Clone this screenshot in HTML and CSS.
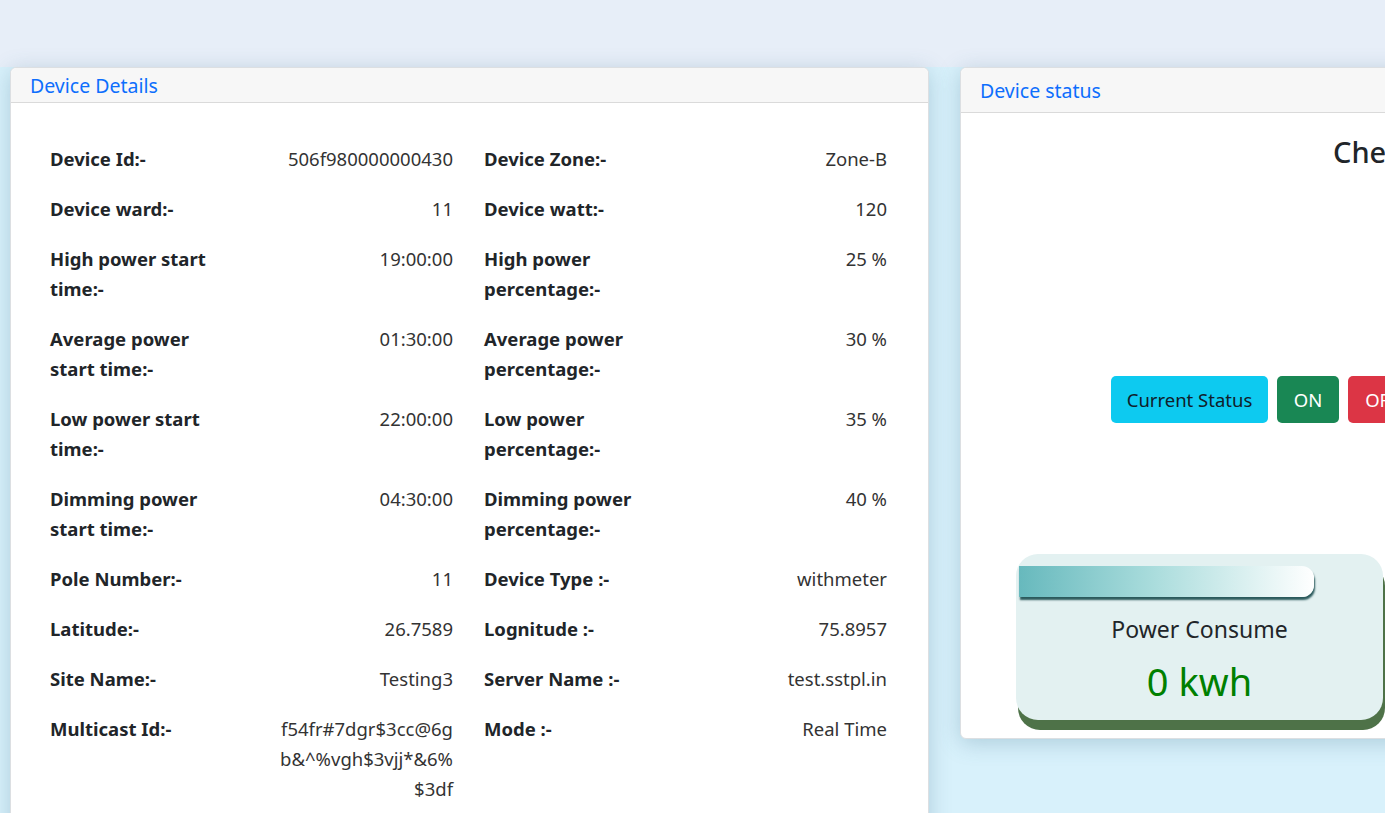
FILE: index.html
```html
<!DOCTYPE html>
<html>
<head>
<meta charset="utf-8">
<link rel="stylesheet" href="styles.css">
</head>
<body>
<div class="topbar"></div>
<main class="content">
  <section class="card details">
    <div class="card-header hdr-sm">Device Details</div>
    <div class="card-body details-body">
      <div class="grid">
        <div class="k">Device Id:-</div><div class="v">506f980000000430</div>
        <div class="k k2">Device Zone:-</div><div class="v">Zone-B</div>

        <div class="k">Device ward:-</div><div class="v">11</div>
        <div class="k k2">Device watt:-</div><div class="v">120</div>

        <div class="k">High power start time:-</div><div class="v">19:00:00</div>
        <div class="k k2">High power percentage:-</div><div class="v">25 %</div>

        <div class="k">Average power start time:-</div><div class="v">01:30:00</div>
        <div class="k k2">Average power percentage:-</div><div class="v">30 %</div>

        <div class="k">Low power start time:-</div><div class="v">22:00:00</div>
        <div class="k k2">Low power percentage:-</div><div class="v">35 %</div>

        <div class="k">Dimming power start time:-</div><div class="v">04:30:00</div>
        <div class="k k2">Dimming power percentage:-</div><div class="v">40 %</div>

        <div class="k">Pole Number:-</div><div class="v">11</div>
        <div class="k k2">Device Type :-</div><div class="v">withmeter</div>

        <div class="k">Latitude:-</div><div class="v">26.7589</div>
        <div class="k k2">Lognitude :-</div><div class="v">75.8957</div>

        <div class="k">Site Name:-</div><div class="v">Testing3</div>
        <div class="k k2">Server Name :-</div><div class="v">test.sstpl.in</div>

        <div class="k">Multicast Id:-</div><div class="v"><span class="ln">f54fr#7dgr$3cc@6g</span><span class="ln">b&amp;^%vgh$3vjj*&amp;6%</span><span class="ln">$3df</span></div>
        <div class="k k2">Mode :-</div><div class="v">Real Time</div>
      </div>
    </div>
  </section>

  <section class="card status">
    <div class="card-header hdr-lg">Device status</div>
    <div class="card-body status-body">
      <h2 class="status-title">Check Status</h2>
      <div class="btn-row">
        <button class="btn btn-info">Current Status</button>
        <button class="btn btn-on">ON</button>
        <button class="btn btn-off">OFF</button>
      </div>
      <div class="power">
        <div class="power-bar"></div>
        <div class="power-label">Power Consume</div>
        <div class="power-value">0 kwh</div>
      </div>
    </div>
  </section>
</main>
</body>
</html>
```

FILE: styles.css
```css
html, body {
  margin: 0;
  padding: 0;
  overflow: hidden;
}
body {
  background: #d8f1fb;
  font-family: "Noto Sans", "Open Sans", sans-serif;
  color: #212529;
  width: 1385px;
  height: 813px;
}
.topbar {
  height: 67px;
  background: #e7eef8;
}
.content {
  display: flex;
  align-items: flex-start;
  gap: 31px;
  padding-left: 10px;
  width: 2000px;
}
.card {
  background: #fff;
  border: 1px solid #dcdfe2;
  border-radius: 6px;
  box-shadow: 0 4px 22px rgba(60, 110, 140, 0.28);
  flex: 0 0 auto;
  overflow: visible;
}
.details {
  width: 917px;
  height: 900px;
}
.status {
  width: 916px;
}
.card-header {
  background: #f7f7f7;
  border-bottom: 1px solid #dadada;
  border-radius: 6px 6px 0 0;
  color: #0d6efd;
  font-size: 19.5px;
  padding-left: 19px;
}
.hdr-sm {
  height: 34px;
  line-height: 36px;
}
.hdr-lg {
  height: 44px;
  line-height: 46px;
}
.details-body {
  padding: 41px 0 0 39px;
}
.grid {
  display: grid;
  grid-template-columns: 177px 226px 208px 226px;
  row-gap: 20px;
  font-size: 18.5px;
  line-height: 30px;
}
.k {
  font-weight: 700;
  color: #212529;
}
.k2 {
  padding-left: 31px;
}
.v {
  text-align: right;
  color: #333;
}
.ln {
  display: block;
}
.status-body {
  padding: 20px 0 18px;
}
.status-title {
  margin: 0;
  padding-left: 372px;
  font-size: 29px;
  font-weight: 500;
  line-height: 38px;
}
.btn-row {
  display: flex;
  gap: 9px;
  margin-top: 205px;
  padding-left: 150px;
}
.btn {
  font-family: inherit;
  font-size: 18.5px;
  height: 47px;
  border: none;
  border-radius: 5px;
  padding: 0;
  white-space: nowrap;
  color: #fff;
}
.btn-info {
  background: #0dcaf0;
  color: #10202a;
  width: 157px;
}
.btn-on {
  background: #198754;
  width: 62px;
}
.btn-off {
  background: #dc3545;
  width: 68px;
}
.power {
  margin: 131px 0 0 55px;
  width: 367px;
  height: 166px;
  background: #e3f1f1;
  border-radius: 22px;
  box-shadow: 2px 10px 0 #4e7248;
  padding-top: 12px;
  box-sizing: border-box;
  text-align: center;
}
.power-bar {
  margin-left: 3px;
  width: 295px;
  height: 31px;
  border-radius: 0 12px 12px 0;
  background: linear-gradient(to right, #67b9bd, #a9dcdc 45%, #ffffff);
  box-shadow: 1px 3px 2px #2b5a5c;
}
.power-label {
  margin-top: 15px;
  font-size: 23px;
  line-height: 34px;
}
.power-value {
  margin-top: 12px;
  font-size: 38px;
  line-height: 46px;
  color: #008000;
}
```
